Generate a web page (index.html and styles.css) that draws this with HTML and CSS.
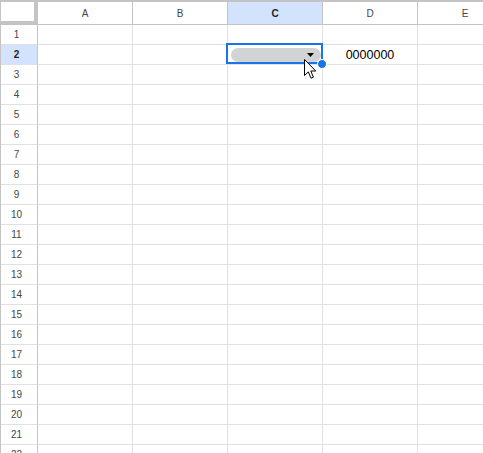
FILE: index.html
```html
<!DOCTYPE html>
<html>
<head>
<meta charset="utf-8">
<link rel="stylesheet" href="styles.css">
</head>
<body>
<div class="sheet">
  <div class="row header">
    <div class="corner"></div>
    <div class="col">A</div>
    <div class="col">B</div>
    <div class="col sel">C</div>
    <div class="col">D</div>
    <div class="col">E</div>
  </div>
  <div class="row"><div class="rh">1</div><div class="c"></div><div class="c"></div><div class="c"></div><div class="c"></div><div class="c"></div></div>
  <div class="row"><div class="rh sel">2</div><div class="c"></div><div class="c"></div>
    <div class="c active">
      <div class="chip"><svg class="arrow" width="7" height="4" viewBox="0 0 7 4"><path d="M0 0H7L3.5 4Z" fill="#000"/></svg></div>
      <div class="selection"></div>
      <div class="handle"></div>
      <svg class="cursor" width="13" height="20" viewBox="0 0 13 20"><path d="M0.5 0.5V16.5L4.3 12.9L7 19.2L9.4 18.2L6.8 12H11.8Z" fill="#fff" stroke="#000" stroke-width="1" stroke-linejoin="round"/></svg>
    </div>
    <div class="c text">0000000</div><div class="c"></div></div>
  <div class="row"><div class="rh">3</div><div class="c"></div><div class="c"></div><div class="c"></div><div class="c"></div><div class="c"></div></div>
  <div class="row"><div class="rh">4</div><div class="c"></div><div class="c"></div><div class="c"></div><div class="c"></div><div class="c"></div></div>
  <div class="row"><div class="rh">5</div><div class="c"></div><div class="c"></div><div class="c"></div><div class="c"></div><div class="c"></div></div>
  <div class="row"><div class="rh">6</div><div class="c"></div><div class="c"></div><div class="c"></div><div class="c"></div><div class="c"></div></div>
  <div class="row"><div class="rh">7</div><div class="c"></div><div class="c"></div><div class="c"></div><div class="c"></div><div class="c"></div></div>
  <div class="row"><div class="rh">8</div><div class="c"></div><div class="c"></div><div class="c"></div><div class="c"></div><div class="c"></div></div>
  <div class="row"><div class="rh">9</div><div class="c"></div><div class="c"></div><div class="c"></div><div class="c"></div><div class="c"></div></div>
  <div class="row"><div class="rh">10</div><div class="c"></div><div class="c"></div><div class="c"></div><div class="c"></div><div class="c"></div></div>
  <div class="row"><div class="rh">11</div><div class="c"></div><div class="c"></div><div class="c"></div><div class="c"></div><div class="c"></div></div>
  <div class="row"><div class="rh">12</div><div class="c"></div><div class="c"></div><div class="c"></div><div class="c"></div><div class="c"></div></div>
  <div class="row"><div class="rh">13</div><div class="c"></div><div class="c"></div><div class="c"></div><div class="c"></div><div class="c"></div></div>
  <div class="row"><div class="rh">14</div><div class="c"></div><div class="c"></div><div class="c"></div><div class="c"></div><div class="c"></div></div>
  <div class="row"><div class="rh">15</div><div class="c"></div><div class="c"></div><div class="c"></div><div class="c"></div><div class="c"></div></div>
  <div class="row"><div class="rh">16</div><div class="c"></div><div class="c"></div><div class="c"></div><div class="c"></div><div class="c"></div></div>
  <div class="row"><div class="rh">17</div><div class="c"></div><div class="c"></div><div class="c"></div><div class="c"></div><div class="c"></div></div>
  <div class="row"><div class="rh">18</div><div class="c"></div><div class="c"></div><div class="c"></div><div class="c"></div><div class="c"></div></div>
  <div class="row"><div class="rh">19</div><div class="c"></div><div class="c"></div><div class="c"></div><div class="c"></div><div class="c"></div></div>
  <div class="row"><div class="rh">20</div><div class="c"></div><div class="c"></div><div class="c"></div><div class="c"></div><div class="c"></div></div>
  <div class="row"><div class="rh">21</div><div class="c"></div><div class="c"></div><div class="c"></div><div class="c"></div><div class="c"></div></div>
  <div class="row"><div class="rh">22</div><div class="c"></div><div class="c"></div><div class="c"></div><div class="c"></div><div class="c"></div></div>
</div>
</body>
</html>
```
FILE: styles.css
```css
html, body {
  margin: 0;
  padding: 0;
  background: #fff;
  overflow: hidden;
}
body {
  font-family: Arial, "Liberation Sans", sans-serif;
  width: 483px;
  height: 453px;
}
.sheet {
  border-top: 2px solid #c4c4c4;
  border-left: 1px solid #c4c4c4;
  width: max-content;
}
.row {
  display: flex;
  height: 20px;
}
.row.header {
  height: 23px;
}
.corner {
  flex: none;
  width: 33px;
  height: 19px;
  border-right: 4px solid #c4c4c4;
  border-bottom: 4px solid #c4c4c4;
  background: #fff;
}
.col {
  flex: none;
  width: 94px;
  height: 22px;
  border-right: 1px solid #c4c4c4;
  border-bottom: 1px solid #c4c4c4;
  display: flex;
  align-items: center;
  justify-content: center;
  font-size: 10px;
  color: #444746;
}
.col.sel {
  background: #d3e3fd;
  color: #1f1f1f;
  font-weight: bold;
}
.rh {
  flex: none;
  width: 31px;
  padding-right: 5px;
  height: 19px;
  border-right: 1px solid #c4c4c4;
  border-bottom: 1px solid #e1e1e1;
  display: flex;
  align-items: center;
  justify-content: center;
  font-size: 10px;
  color: #444746;
}
.rh.sel {
  background: #d3e3fd;
  color: #1f1f1f;
  font-weight: bold;
}
.c {
  flex: none;
  width: 94px;
  height: 19px;
  border-right: 1px solid #e1e1e1;
  border-bottom: 1px solid #e1e1e1;
}
.c.text {
  box-sizing: border-box;
  width: 95px;
  height: 20px;
  padding-top: 2px;
  font-size: 12.5px;
  line-height: 17px;
  text-align: center;
  color: #000;
}
.c.active {
  position: relative;
  box-sizing: border-box;
  width: 95px;
  height: 20px;
  padding: 3px 1px 0 3px;
}
.chip {
  height: 14px;
  border-radius: 7px;
  background: #d2d3d5;
  display: flex;
  align-items: center;
  justify-content: flex-end;
  padding-right: 7px;
}
.arrow {
  display: block;
}
.selection {
  position: absolute;
  left: -2px;
  top: -2px;
  width: 97px;
  height: 21px;
  box-sizing: border-box;
  border: 2px solid #1a73e8;
  pointer-events: none;
}
.handle {
  position: absolute;
  left: 89px;
  top: 14px;
  width: 8px;
  height: 8px;
  border-radius: 50%;
  background: #1a73e8;
  border: 1px solid #fff;
  z-index: 2;
}
.cursor {
  position: absolute;
  left: 76px;
  top: 14px;
  z-index: 3;
  display: block;
}
```
